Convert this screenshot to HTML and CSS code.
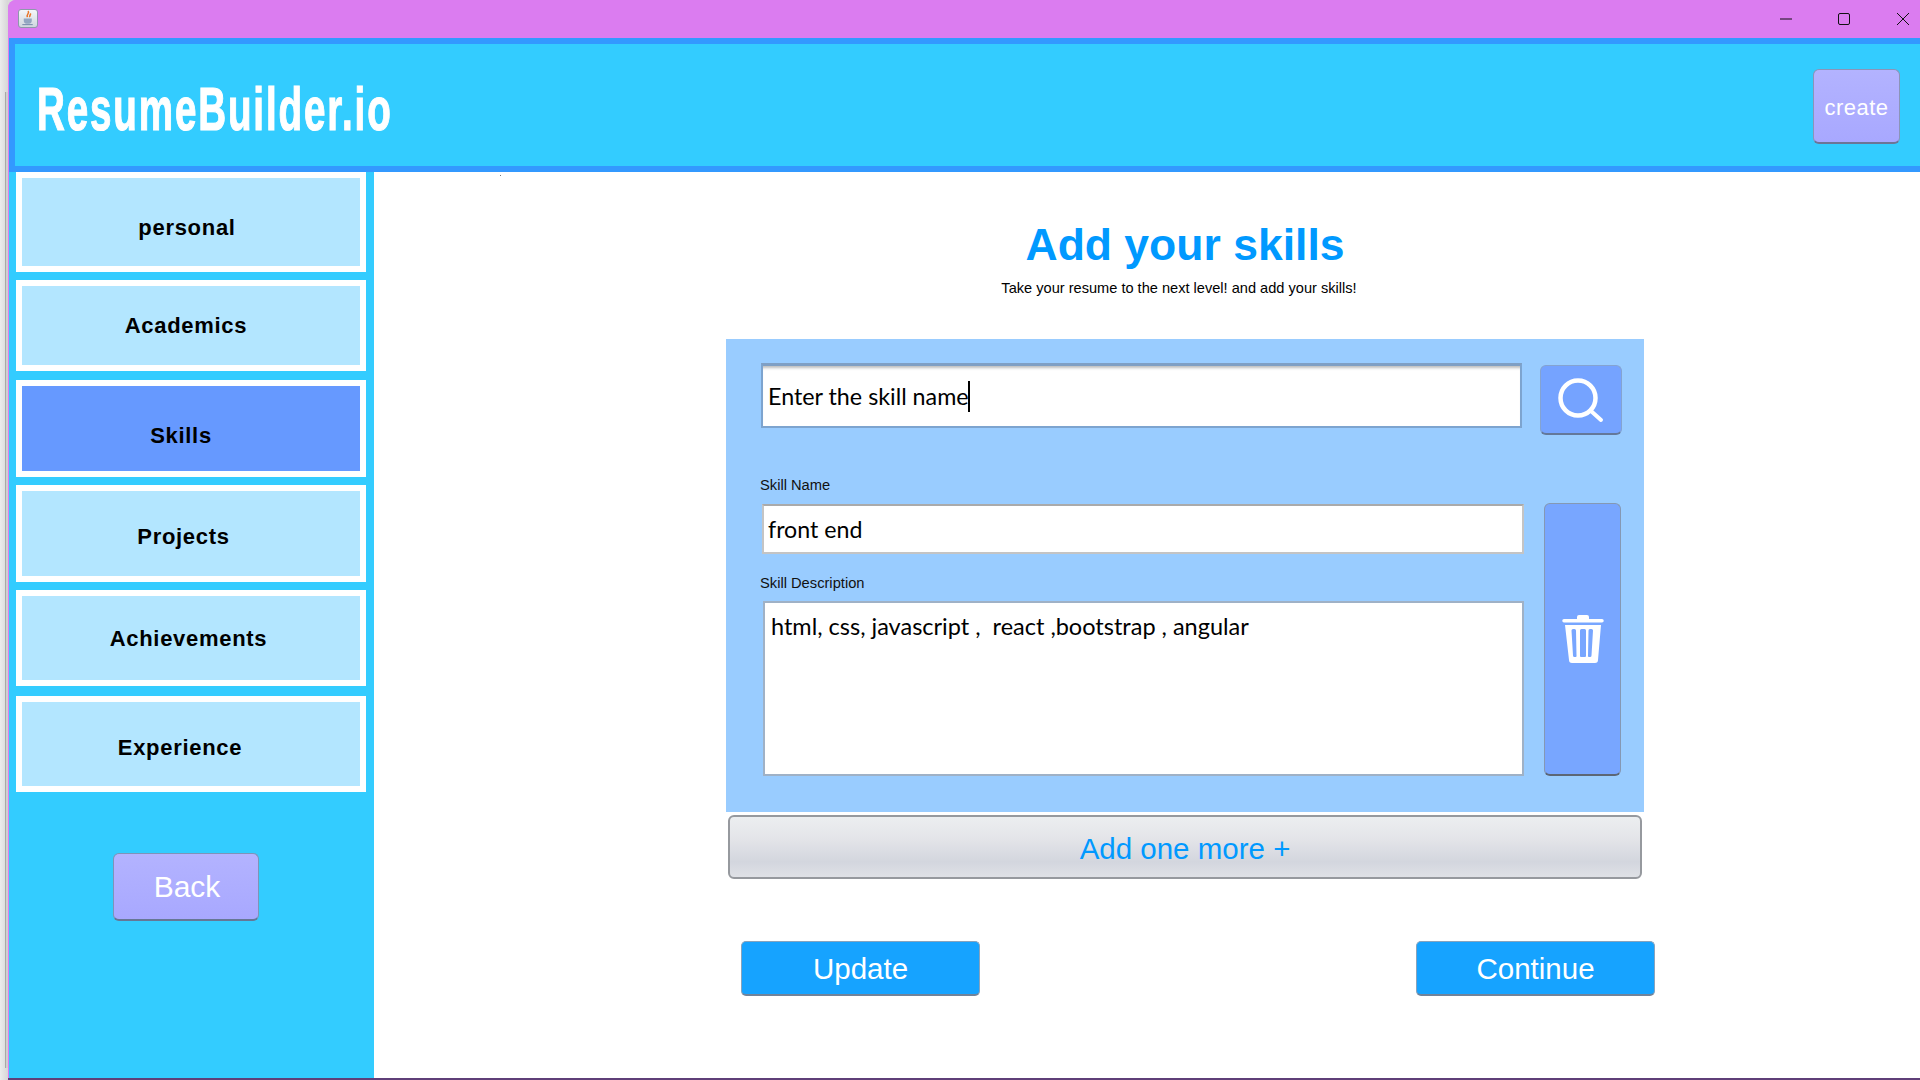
FILE: index.html
```html
<!DOCTYPE html>
<html lang="en">
<head>
<meta charset="utf-8">
<title>ResumeBuilder.io</title>
<link rel="stylesheet" href="styles.css">
</head>
<body>
<div class="desktop-strip"><div class="behind-window"></div></div>
<div class="window">
  <div class="titlebar">
    <div class="app-icon">
      <svg viewBox="0 0 18 18" width="18" height="17"><path d="M9 1c2.500 2.500-2.500 3.500-.5 6.500M11.500 3.500c1 1.500-1.500 2-.5 4" fill="none" stroke="#e9752a" stroke-width="1.600"/><path d="M4.500 9h8.500v2.500a3 3 0 0 1-3 3H7.500a3 3 0 0 1-3-3z" fill="#93a6c2"/><path d="M3 15.500h11" stroke="#6d84a8" stroke-width="1"/></svg>
    </div>
    <div class="win-controls">
      <svg class="win-min" viewBox="0 0 14 14" width="14" height="14"><path d="M1 7h12" stroke="#111" stroke-width="1"/></svg>
      <svg class="win-max" viewBox="0 0 14 14" width="14" height="14"><rect x="1.500" y="1.500" width="11" height="11" rx="1.500" fill="none" stroke="#111" stroke-width="1"/></svg>
      <svg class="win-close" viewBox="0 0 14 14" width="14" height="14"><path d="M1 1l12 12M13 1L1 13" stroke="#111" stroke-width="1"/></svg>
    </div>
  </div>
  <header class="header">
    <div class="logo">ResumeBuilder.io</div>
    <button class="create-btn">create</button>
  </header>
  <div class="body-row">
    <nav class="sidebar">
      <div class="nav-item nav-personal"><span>personal</span></div>
      <div class="nav-item nav-academics"><span>Academics</span></div>
      <div class="nav-item nav-skills"><span>Skills</span></div>
      <div class="nav-item nav-projects"><span>Projects</span></div>
      <div class="nav-item nav-achievements"><span>Achievements</span></div>
      <div class="nav-item nav-experience"><span>Experience</span></div>
      <button class="back-btn">Back</button>
    </nav>
    <main class="main">
      <span class="speck"></span>
      <h1 class="title">Add your skills</h1>
      <p class="subtitle">Take your resume to the next level! and add your skills!</p>
      <section class="panel">
        <div class="search-row">
          <div class="search-input">Enter the skill name<span class="caret"></span></div>
          <button class="search-btn">
            <svg viewBox="0 0 50 50" width="50" height="50"><circle cx="22" cy="23" r="17.500" fill="none" stroke="#fff" stroke-width="4.500"/><path d="M35 36l10 9" stroke="#fff" stroke-width="4" stroke-linecap="round"/></svg>
          </button>
        </div>
        <div class="detail-row">
          <div class="fields">
            <label class="field-label first">Skill Name</label>
            <div class="text-field">front end</div>
            <label class="field-label second">Skill Description</label>
            <div class="text-area">html, css, javascript ,&nbsp; react ,bootstrap , angular</div>
          </div>
          <button class="trash-btn">
            <svg class="trash-icon" viewBox="0 0 46 52" width="46" height="52"><path d="M17 5a2 2 0 0 1 2-2h8a2 2 0 0 1 2 2v2h13a1.500 1.500 0 0 1 0 3.500H4A1.500 1.500 0 0 1 4 7h13z" fill="#fff"/><path fill-rule="evenodd" d="M5 13h36l-3 35a3 3 0 0 1-3 3H12a3 3 0 0 1-3-3zM13 17a1.500 1.500 0 0 0-1.500 1.500l1.500 25a1.500 1.500 0 0 0 1.500 1.500h1a1 1 0 0 0 1-1.500L16 18.500A1.500 1.500 0 0 0 14.500 17zM21.500 17a1.500 1.500 0 0 0-1.500 1.500V44a1 1 0 0 0 1 1h4a1 1 0 0 0 1-1V18.500a1.500 1.500 0 0 0-1.500-1.500zM30 17a1.500 1.500 0 0 0-1.500 1.500l-.5 25a1 1 0 0 0 1 1.500h1a1.500 1.500 0 0 0 1.500-1.500l1.500-25A1.500 1.500 0 0 0 31.500 17z" fill="#fff"/></svg>
          </button>
        </div>
      </section>
      <button class="add-btn">Add one more +</button>
      <div class="actions">
        <button class="action-btn">Update</button>
        <button class="action-btn">Continue</button>
      </div>
    </main>
  </div>
</div>
```

FILE: styles.css
```css
* { box-sizing: border-box; }
html, body { margin: 0; padding: 0; }
body {
  width: 1920px;
  height: 1080px;
  overflow: hidden;
  display: flex;
  background: #d9d9d9;
  font-family: "Liberation Sans", Arial, sans-serif;
}
button { font-family: inherit; padding: 0; cursor: default; }

.desktop-strip {
  width: 8px; flex: none;
  padding: 92px 0 12px 5px;
  background: linear-gradient(90deg, #ececec, #d6d6d6);
}
.behind-window { height: 100%; border-left: 1px solid #a8a8a8; background: #cfcfcf; }
.window {
  width: 1912px;
  height: 1080px;
  flex: none;
  display: flex;
  flex-direction: column;
  background: #db7cf0;
  border-top-left-radius: 8px;
  border-bottom: 2px solid #5f3f78;
  overflow: hidden;
}

.titlebar { height: 38px; flex: none; background: #db7cf0; display: flex; align-items: center; padding-left: 10px; }
.app-icon {
  width: 20px; height: 19px; margin-top: -1px;
  background: linear-gradient(#f4f6f8, #cfd6df);
  border: 1px solid #8d99ab;
  border-radius: 3px;
  display: flex; align-items: center; justify-content: center;
  overflow: hidden;
}
.win-controls { margin-left: auto; display: flex; align-items: center; padding-right: 10px; }
.win-min { margin-right: 44px; }
.win-max { margin-right: 45px; }

.header {
  height: 134px; flex: none;
  margin-left: 1px;
  background: #33ccff;
  border: solid #3399ff;
  border-width: 6px 0 6px 6px;
  display: flex;
  align-items: center;
  padding: 0 20px 0 22px;
}
.logo {
  font-family: "Liberation Sans", sans-serif;
  font-weight: 700;
  font-size: 62px;
  line-height: 1;
  color: #fff;
  letter-spacing: 3px;
  -webkit-text-stroke: 1.200px #fff;
  transform: scaleX(.622);
  transform-origin: left center;
  white-space: nowrap;
  width: 600px;
  flex: none;
  margin-top: 8px;
}
.create-btn {
  margin-left: auto;
  width: 87px; height: 75px;
  margin-top: 3px;
  padding-top: 3px;
  border-radius: 6px;
  border: 1px solid #8b94b8;
  border-bottom: 2px solid #6c7596;
  background: linear-gradient(#b3b3ff, #a8a8ff);
  color: #fff;
  font-size: 22px;
  letter-spacing: .5px;
}

.body-row { flex: 1; display: flex; min-height: 0; }
.sidebar {
  width: 365px; flex: none;
  margin-left: 1px;
  background: #33ccff;
  padding-left: 7px;
  display: flex;
  flex-direction: column;
}
.nav-item {
  width: 350px;
  border: 6px solid #fff;
  background: #b3e6ff;
  display: flex;
  align-items: center;
  justify-content: center;
  font-weight: 700;
  font-size: 22px;
  letter-spacing: .7px;
  color: #000;
}
.nav-personal { height: 100px; padding: 11px 8px 0 0; margin-bottom: 8px; }
.nav-academics { height: 91px; padding: 0 10px 0 0; margin-bottom: 9px; }
.nav-skills { height: 97px; padding: 14px 20px 0 0; margin-bottom: 8px; background: #6699ff; }
.nav-projects { height: 97px; padding: 6px 15px 0 0; margin-bottom: 8px; }
.nav-achievements { height: 96px; padding: 1px 5px 0 0; margin-bottom: 10px; }
.nav-experience { height: 96px; padding: 7px 22px 0 0; }

.back-btn {
  width: 146px; height: 68px;
  margin: 61px 0 0 97px;
  padding-left: 2px;
  border-radius: 6px;
  border: 1px solid #7f93b8;
  border-bottom: 2px solid #667796;
  background: linear-gradient(#b3b3ff, #a8a8ff);
  color: #fff;
  font-size: 30px;
}

.main { flex: 1; position: relative; background: #fff; padding-left: 352px; display: flex; flex-direction: column; align-items: flex-start; min-width: 0; }
.speck { position: absolute; left: 126px; top: 3px; width: 1px; height: 1px; background: #777; }
.title {
  width: 918px;
  margin: 45px 0 0;
  font-size: 44.500px;
  line-height: 56px;
  font-weight: 700;
  color: #0099ff;
  text-align: center;
}
.subtitle {
  width: 918px;
  margin: 5px 0 0;
  padding-right: 12px;
  font-size: 14.600px;
  line-height: 20px;
  color: #000;
  text-align: center;
}

.panel {
  width: 918px; height: 473px;
  margin-top: 41px;
  background: #99ccff;
  padding: 24px 0 0 34px;
}
.search-row { display: flex; align-items: flex-start; }
.search-input {
  width: 761px; height: 65px;
  margin-left: 1px;
  background: #fff;
  border: 2px solid #7da4cf;
  border-top: 3px solid #7f9fc4;
  box-shadow: inset 0 4px 3px -2px #bdbdbd;
  display: flex;
  align-items: center;
  padding-left: 5px;
  font-family: Lato, sans-serif;
  font-size: 23.300px;
  color: #000;
}
.caret { display: inline-block; width: 2px; height: 31px; background: #000; margin-left: -1px; }
.search-btn {
  width: 82px; height: 70px;
  margin: 2px 0 0 18px;
  border-radius: 6px;
  border: 1px solid #84a3d1;
  border-bottom: 2px solid #64789a;
  background: #75a3ff;
  display: flex; align-items: center; justify-content: center;
}
.detail-row { display: flex; align-items: flex-start; margin-top: 41px; }
.fields { width: 764px; }
.field-label { display: block; height: 28px; font-size: 14.700px; color: #111; line-height: 20px; }
.field-label.first { line-height: 18px; }
.field-label.second { margin-top: 19px; }
.text-field {
  width: 762px; height: 50px;
  margin-left: 2px;
  background: #fff;
  border: 2px solid #c4c4c4;
  border-top-color: #aaa;
  display: flex;
  align-items: center;
  padding-left: 4px;
  font-family: Lato, sans-serif;
  font-size: 23.200px;
}
.text-area {
  width: 761px; height: 175px;
  margin-left: 3px;
  background: #fff;
  border: 2px solid #9fb1c6;
  padding: 9px 6px;
  font-family: Lato, sans-serif;
  font-size: 23.500px;
  line-height: 29px;
}
.trash-btn {
  width: 77px; height: 273px;
  margin: 27px 0 0 20px;
  border-radius: 6px;
  border: 1px solid #8598b3;
  border-bottom: 2px solid #5c6675;
  background: #78a6ff;
  display: flex; align-items: center; justify-content: center;
}
.trash-icon { margin-top: -3px; }
.add-btn {
  width: 914px; height: 64px;
  margin: 3px 0 0 2px;
  padding-top: 3px;
  border-radius: 6px;
  border: 2px solid #96999e;
  background: linear-gradient(#eceef0 0%, #e4e5e9 35%, #d3d6de 75%, #dfe1e6 100%);
  color: #0099ff;
  font-size: 29.500px;
}
.actions { width: 914px; margin: 62px 0 0 15px; display: flex; justify-content: space-between; }
.action-btn {
  width: 239px; height: 55px;
  padding-top: 1px;
  border-radius: 5px;
  border: 1px solid #87a3bd;
  border-bottom: 2px solid #70839a;
  background: #16a3ff;
  color: #fff;
  font-size: 29.500px;
}
```
